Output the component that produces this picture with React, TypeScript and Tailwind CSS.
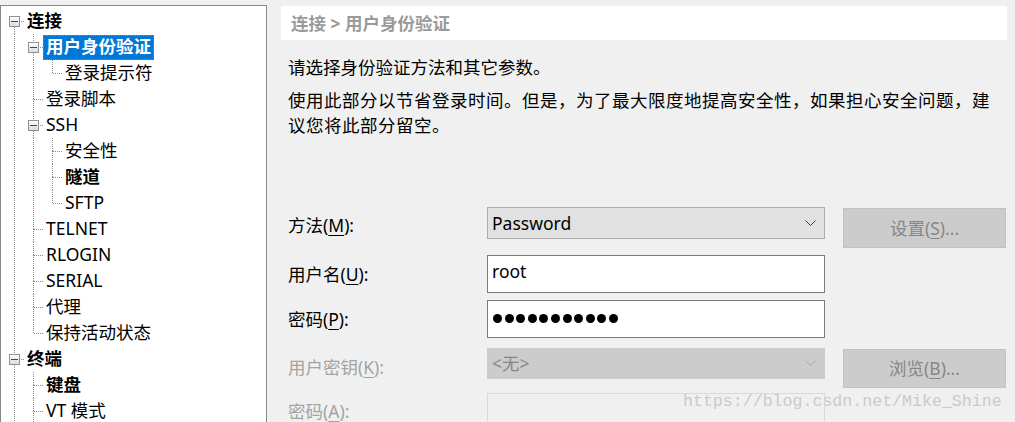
import React from "react";

type TreeItem = {
  label: string;
  guides: boolean[];
  top: boolean;
  next: boolean;
  expander?: boolean;
  bold?: boolean;
  selected?: boolean;
};

const tree: TreeItem[] = [
  { label: "连接", guides: [], top: false, next: true, expander: true, bold: true },
  { label: "用户身份验证", guides: [true], top: true, next: true, expander: true, bold: true, selected: true },
  { label: "登录提示符", guides: [true, true], top: true, next: false },
  { label: "登录脚本", guides: [true], top: true, next: true },
  { label: "SSH", guides: [true], top: true, next: true, expander: true },
  { label: "安全性", guides: [true, true], top: true, next: true },
  { label: "隧道", guides: [true, true], top: true, next: true, bold: true },
  { label: "SFTP", guides: [true, true], top: true, next: false },
  { label: "TELNET", guides: [true], top: true, next: true },
  { label: "RLOGIN", guides: [true], top: true, next: true },
  { label: "SERIAL", guides: [true], top: true, next: true },
  { label: "代理", guides: [true], top: true, next: true },
  { label: "保持活动状态", guides: [true], top: true, next: false },
  { label: "终端", guides: [], top: true, next: true, expander: true, bold: true },
  { label: "键盘", guides: [true], top: true, next: true, bold: true },
  { label: "VT 模式", guides: [true], top: true, next: true },
];

const dots = { stroke: "#8c8c8c", strokeWidth: 1, strokeDasharray: "1 1", shapeRendering: "crispEdges" as const };

function Cell({ pipe, own, top, next, expander }: { pipe?: boolean; own?: boolean; top?: boolean; next?: boolean; expander?: boolean }) {
  return (
    <div className="relative h-[26px] w-[19px] shrink-0">
      <svg width="19" height="26" className="absolute left-0 top-0">
        {pipe && <line x1="9.5" y1="0" x2="9.5" y2="26" {...dots} />}
        {own && top && <line x1="9.5" y1="0" x2="9.5" y2="13" {...dots} />}
        {own && next && <line x1="9.5" y1="13" x2="9.5" y2="26" {...dots} />}
        {own && <line x1="10" y1="13.5" x2="19" y2="13.5" {...dots} />}
      </svg>
      {expander && (
        <div className="absolute left-[4px] top-[8px] flex h-[11px] w-[11px] items-center justify-center border border-[#919191] bg-gradient-to-b from-white to-[#dcdcdc]">
          <div className="h-[1px] w-[7px] bg-[#1f4e8c]" />
        </div>
      )}
    </div>
  );
}

function TreeRow({ item }: { item: TreeItem }) {
  return (
    <div className="flex h-[26px] items-center">
      {item.guides.map((g, i) => (
        <Cell key={i} pipe={g} />
      ))}
      <Cell own top={item.top} next={item.next} expander={item.expander} />
      <span
        className={
          "flex h-[25px] items-center whitespace-nowrap border px-[2px] leading-none " +
          (item.selected
            ? "border-dotted border-[#c77a2f] bg-[#0078d7] text-white "
            : "border-transparent text-black ") +
          (item.bold ? "font-bold" : "")
        }
      >
        {item.label}
      </span>
    </div>
  );
}

function Key({ children }: { children: React.ReactNode }) {
  return <span className="underline underline-offset-[3px]">{children}</span>;
}

function Chevron({ color }: { color: string }) {
  return (
    <svg width="11" height="7" viewBox="0 0 11 7" className="shrink-0">
      <polyline points="0.5,0.5 5.5,5.5 10.5,0.5" fill="none" stroke={color} strokeWidth="1" />
    </svg>
  );
}

export default function App() {
  return (
    <div className="relative flex h-[422px] w-[1015px] overflow-hidden bg-[#f0f0f0] font-['Noto_Sans','Noto_Sans_CJK_SC',sans-serif] text-[17.5px] text-black">
      {/* navigation tree */}
      <div className="mt-[5px] w-[267px] shrink-0 border-l border-r border-t border-[#828790] bg-white pl-[4px] pt-[2px]">
        {tree.map((item) => (
          <TreeRow key={item.label} item={item} />
        ))}
      </div>

      {/* page */}
      <div className="ml-[14px] w-[726px] pt-[6px]">
        <div className="flex h-[34px] items-center bg-white px-[10px] font-bold text-[#9a9a9a]">
          连接 &gt; 用户身份验证
        </div>

        <div className="pl-[7px]">
          <p className="mt-[15px] leading-[25px]">请选择身份验证方法和其它参数。</p>
          <p className="mt-[8px] whitespace-nowrap leading-[25px] tracking-[0.5px]">
            使用此部分以节省登录时间。但是，为了最大限度地提高安全性，如果担心安全问题，建
            <br />
            议您将此部分留空。
          </p>

          <div className="mt-[69px] flex flex-col">
            <div className="flex h-[48px] items-start">
              <div className="flex h-[36px] w-[199px] items-center">
                方法(<Key>M</Key>):
              </div>
              <div className="flex h-[32px] w-[338px] items-center justify-between border border-[#adadad] bg-[#e1e1e1] pl-[4px] pr-[8px]">
                <span>Password</span>
                <Chevron color="#404040" />
              </div>
              <button className="ml-[18px] mt-[1px] h-[40px] w-[163px] border border-[#c2c2c2] bg-[#cccccc] text-[#868686]">
                设置(<Key>S</Key>)...
              </button>
            </div>

            <div className="flex h-[45px] items-start">
              <div className="flex h-[38px] w-[199px] items-center">
                用户名(<Key>U</Key>):
              </div>
              <div className="flex h-[38px] w-[338px] items-center border border-[#7a7a7a] bg-white pb-[5px] pl-[4px]">
                root
              </div>
            </div>

            <div className="flex h-[48px] items-start">
              <div className="flex h-[38px] w-[199px] items-center">
                密码(<Key>P</Key>):
              </div>
              <div className="flex h-[38px] w-[338px] items-center gap-[2.6px] border border-[#7a7a7a] bg-white pb-[2px] pl-[5px]">
                {Array.from({ length: 11 }).map((_, i) => (
                  <span key={i} className="h-[9px] w-[9px] rounded-full bg-black" />
                ))}
              </div>
            </div>

            <div className="flex h-[45px] items-start text-[#a3a3a3]">
              <div className="flex h-[38px] w-[199px] items-center">
                用户密钥(<Key>K</Key>):
              </div>
              <div className="flex h-[31px] w-[338px] items-center justify-between border border-[#cccccc] bg-[#cccccc] pl-[4px] pr-[8px] text-[#878787]">
                <span>&lt;无&gt;</span>
                <Chevron color="#a8a8a8" />
              </div>
              <button className="ml-[18px] mt-[1px] h-[39px] w-[163px] border border-[#c2c2c2] bg-[#cccccc] text-[#868686]">
                浏览(<Key>B</Key>)...
              </button>
            </div>

            <div className="flex h-[38px] items-start text-[#a3a3a3]">
              <div className="flex h-[36px] w-[199px] items-center">
                密码(<Key>A</Key>):
              </div>
              <div className="h-[38px] w-[338px] border border-[#d9d9d9] bg-[#f0f0f0]" />
            </div>
          </div>
        </div>
      </div>

      {/* watermark */}
      <div className="absolute left-[683px] top-[391px] font-['Liberation_Mono',monospace] text-[16.6px] leading-[22px] text-[#cacaca]">
        https://blog.csdn.net/Mike_Shine
      </div>
    </div>
  );
}
